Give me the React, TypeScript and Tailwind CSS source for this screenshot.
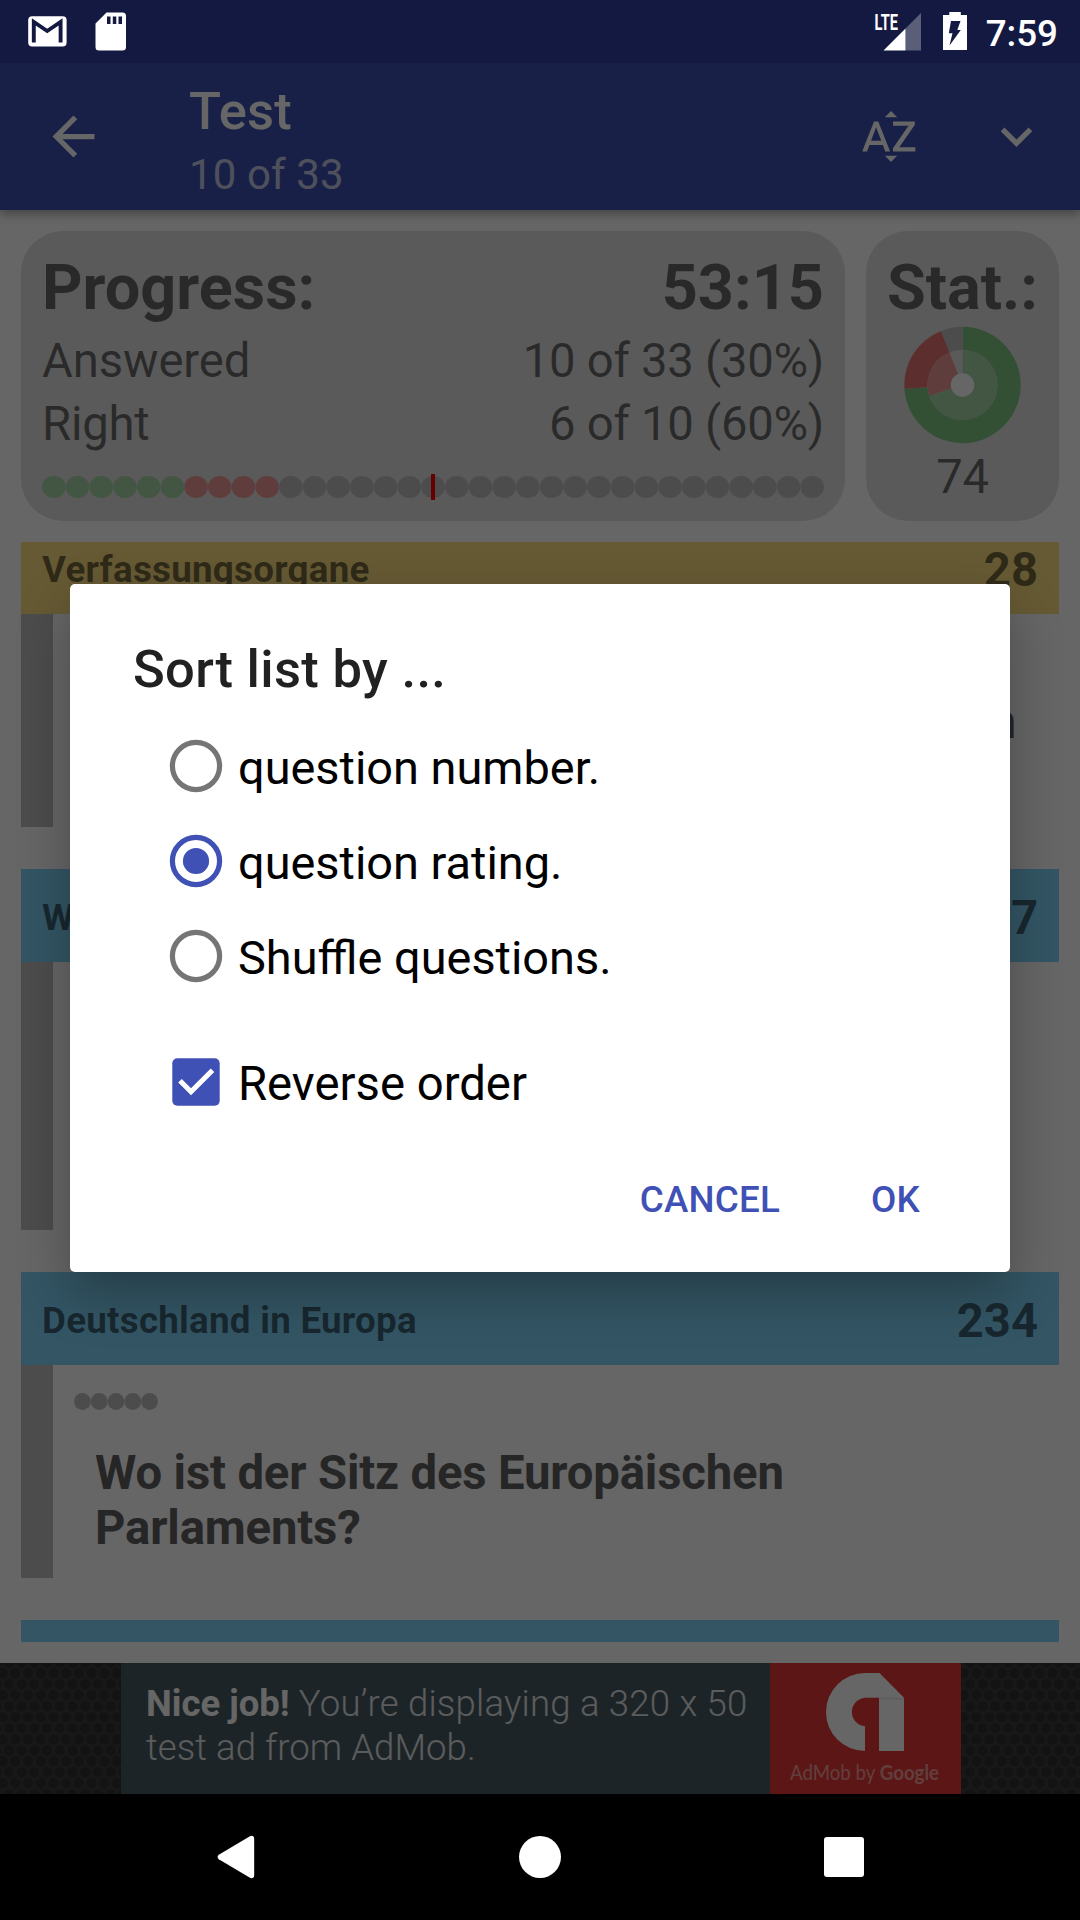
import React from "react";
import { MdArrowBack, MdSortByAlpha, MdExpandMore } from "react-icons/md";

const ANSWER_DOTS = Array.from({ length: 33 }, (_, i) =>
  i < 6 ? "fill-[#a5d6a7]" : i < 10 ? "fill-[#ef9a9a]" : "fill-[#bdbdbd]"
);

function StatusBar() {
  return (
    <div className="relative z-20 flex h-[63px] items-start bg-[#131940] text-white">
      <svg className="ml-7 mt-4 h-[31px] w-[39px]" viewBox="0 0 39 31">
        <rect x="0.2" y="0.2" width="38.4" height="30.4" rx="4" fill="currentColor" />
        <path d="M5.8 26.5V6l13.4 9L32.6 6v20.5" fill="none" stroke="#131940" strokeWidth="3.9" />
      </svg>
      <svg className="ml-7 mt-3 h-[39px] w-[32px]" viewBox="0 0 32 39">
        <path d="M11.500 0.500H27.500a3.500 3.500 0 0 1 3.500 3.500V35a3.500 3.500 0 0 1-3.500 3.500H4A3.500 3.500 0 0 1 .500 35V11.500z" fill="currentColor" />
        <path d="M12 4.500h3.500v7.500H12zM17.800 4.500h3.500v7.500h-3.500zM23.500 4.500h3.500v7.500h-3.500z" fill="#131940" />
      </svg>
      <div className="ml-auto flex items-start">
        <svg className="mt-1 h-[47px] w-[56px]" viewBox="-8 -8 56 47">
          <text x="0.5" y="17.8" fontFamily="Roboto" fontWeight="700" fontSize="22.5" textLength="23.5" lengthAdjust="spacingAndGlyphs" fill="currentColor">LTE</text>
          <path d="M31.500 16.500V38.500H9.500z" fill="currentColor" />
          <path d="M31.500 16.500L47 1V38.500H31.500z" fill="currentColor" opacity="0.3" />
        </svg>
        <svg className="ml-[21px] mt-3 h-[38px] w-[24px]" viewBox="0 0 24 38">
          <path d="M6.300 0h11.500v3H24v35H0V3h6.300z" fill="currentColor" />
          <path d="M8 9h9.500l-3.200 9h3.500L6.500 33.500l3-12.200H5.800z" fill="#131940" />
        </svg>
        <div className="ml-[19px] mr-[22px] mt-2 text-[36.75px] font-medium leading-[51px]">7:59</div>
      </div>
    </div>
  );
}

function AppBar() {
  return (
    <div className="relative z-10 flex h-[147px] items-center bg-[#3f51b5] text-white shadow-[0_4px_10px_rgba(0,0,0,0.35)]">
      <MdArrowBack className="ml-[42px] size-[63px]" />
      <div className="ml-[84px] flex-1 pt-3">
        <div className="text-[52.5px] font-medium leading-[61px] tracking-[0.15px]">Test</div>
        <div className="mt-[3px] text-[42px] leading-[60px] tracking-[0.1px] text-white/70">10 of 33</div>
      </div>
      <MdSortByAlpha className="mb-px size-[63px]" />
      <MdExpandMore className="ml-16 mr-8 size-[63px]" />
    </div>
  );
}

function ProgressCard() {
  return (
    <div className="flex h-[290px] w-[824px] flex-col rounded-[42px] bg-[#e1e1e1] px-[21px] pt-5 text-black/54">
      <div className="flex justify-between text-[63px] font-bold leading-[74px]">
        <span>Progress:</span>
        <span>53:15</span>
      </div>
      <div className="mt-[5px] flex justify-between text-[47.25px] leading-[63px]">
        <span className="tracking-[-0.1px]">Answered</span>
        <span className="tracking-[-0.28px]">10 of 33 (30%)</span>
      </div>
      <div className="flex justify-between text-[47.25px] leading-[63px]">
        <span className="tracking-[-0.2px]">Right</span>
        <span className="tracking-[-0.28px]">6 of 10 (60%)</span>
      </div>
      <svg className="mt-[18px] h-[26px] w-[782px]" viewBox="0 0 782 26">
        {ANSWER_DOTS.map((tone, i) => (
          <ellipse key={i} cx={11.85 + i * 23.7} cy="13" rx="11.8" ry="11.1" className={tone} />
        ))}
        <rect x="389" y="0" width="4" height="26" fill="#ff0000" />
      </svg>
    </div>
  );
}

function arc(r0: number, r1: number, from: number, to: number) {
  const pt = (r: number, pct: number) => {
    const a = (pct / 100) * Math.PI * 2;
    return `${(r * Math.sin(a)).toFixed(2)} ${(-r * Math.cos(a)).toFixed(2)}`;
  };
  const large = to - from > 50 ? 1 : 0;
  return `M${pt(r1, from)}A${r1} ${r1} 0 ${large} 1 ${pt(r1, to)}L${pt(r0, to)}A${r0} ${r0} 0 ${large} 0 ${pt(r0, from)}Z`;
}

function StatCard() {
  return (
    <div className="flex h-[290px] w-[193px] flex-col items-center rounded-[42px] bg-[#e1e1e1] pt-5 text-black/54">
      <div className="text-[63px] font-bold leading-[74px]">Stat.:</div>
      <svg className="mr-px mt-px size-[118px]" viewBox="-59.5 -59 118 118">
        <path d={arc(35, 58.2, 0, 74)} fill="#81c784" />
        <path d={arc(35, 58.2, 74, 94)} fill="#e57373" />
        <path d={arc(35, 58.2, 94, 100)} fill="#bdbdbd" />
        <path d={arc(11.5, 35, 0, 70)} fill="#a5d6a7" />
        <path d={arc(11.5, 35, 70, 94)} fill="#ef9a9a" />
        <path d={arc(11.5, 35, 94, 100)} fill="#e0e0e0" />
        <circle r="11.7" fill="#ffffff" />
      </svg>
      <div className="mt-0.5 text-[47.25px] leading-[63px] tracking-[-0.2px]">74</div>
    </div>
  );
}

function SectionHeader({ title, count, tone }: { title: string; count: string; tone: string }) {
  return (
    <div className={`flex h-[93px] shrink-0 items-center justify-between px-[21px] pt-1 font-bold text-black/54 ${tone}`}>
      <span className="text-[36.75px] tracking-[0.25px]">{title}</span>
      <span className="mt-px text-[47.25px]">{count}</span>
    </div>
  );
}

function QuestionList() {
  return (
    <div className="mx-[21px] mt-[21px] flex h-[1100px] flex-col justify-end overflow-hidden">
      <SectionHeader title="Verfassungsorgane" count="28" tone="bg-[#ffe082]" />
      <div className="flex h-[213px] shrink-0 justify-between">
        <div className="w-8 bg-[#bdbdbd]" />
        <div className="mr-[43px] mt-[81px] text-[47.25px] font-bold leading-[55px] text-[#606060]">n</div>
      </div>
      <div className="mt-[42px] shrink-0">
        <SectionHeader title="W" count="7" tone="bg-[#81d4fa]" />
        <div className="h-[268px] w-8 bg-[#bdbdbd]" />
      </div>
      <div className="mt-[42px] shrink-0">
        <SectionHeader title="Deutschland in Europa" count="234" tone="bg-[#81d4fa]" />
        <div className="flex h-[213px]">
          <div className="w-8 bg-[#bdbdbd]" />
          <div className="flex-1 pl-[21px] pt-7">
            <svg className="h-[17px] w-[84px]" viewBox="0 0 84 17">
              {[0, 1, 2, 3, 4].map((i) => (
                <circle key={i} cx={8.4 + i * 16.8} cy="8.5" r="8.4" fill="#bdbdbd" />
              ))}
            </svg>
            <p className="ml-[21px] mt-9 w-[800px] text-[47.25px] font-bold leading-[55px] tracking-[-0.16px] text-[#606060]">
              Wo ist der Sitz des Europäischen Parlaments?
            </p>
          </div>
        </div>
      </div>
      <div className="mt-[42px] h-[22px] shrink-0 bg-[#81d4fa]" />
    </div>
  );
}

function HexPanel({ id, className }: { id: string; className: string }) {
  return (
    <svg className={className}>
      <defs>
        <pattern id={id} width="12.7" height="22" patternUnits="userSpaceOnUse">
          <rect width="13" height="22" fill="#3e3e3e" />
          <circle cx="9" cy="21.3" r="5.2" fill="#303030" />
          <circle cx="9" cy="-0.7" r="5.2" fill="#303030" />
          <circle cx="-3.7" cy="21.3" r="5.2" fill="#303030" />
          <circle cx="-3.7" cy="-0.7" r="5.2" fill="#303030" />
          <circle cx="2.65" cy="10.3" r="5.2" fill="#303030" />
          <circle cx="15.35" cy="10.3" r="5.2" fill="#303030" />
        </pattern>
      </defs>
      <rect width="100%" height="100%" fill={`url(#${id})`} />
    </svg>
  );
}

function AdBanner() {
  return (
    <div className="mt-[21px] flex h-[131px]">
      <HexPanel id="hex-left" className="h-[131px] w-[121px]" />
      <div className="w-[649px] bg-[#485a62] pl-[25px] pt-[19px] text-[36.5px] font-light leading-[44px] text-white/85">
        <div className="whitespace-nowrap tracking-[0.23px]">
          <b className="font-bold tracking-normal text-white">Nice job!</b> You’re displaying a 320 x 50
        </div>
        <div className="tracking-[0.07px]">test ad from AdMob.</div>
      </div>
      <div className="relative w-[191px] bg-[#e53935]">
        <svg className="h-[131px] w-[191px]" viewBox="0 0 191 131">
          <path
            d="M95 10H109.500L134 34.700V88H109V34.700H95A14.300 14.300 0 0 0 95 63.200V88A39 39 0 0 1 95 10Z"
            fill="#ffffff"
          />
          <path d="M109 34.700h25v2h-25z" fill="#000000" opacity="0.08" />
          <text x="20" y="117" fontFamily="Lato" fontSize="21" fill="#ffffff" fillOpacity="0.52" textLength="149" lengthAdjust="spacingAndGlyphs">
            AdMob by <tspan fontWeight="700">Google</tspan>
          </text>
        </svg>
      </div>
      <HexPanel id="hex-right" className="h-[131px] w-[119px]" />
    </div>
  );
}

function NavBar() {
  return (
    <div className="relative z-20 flex h-[126px] items-center bg-black text-white">
      <svg className="ml-[217px] h-[44px] w-[38px]" viewBox="0 0 38 44">
        <path d="M1.800 19.800 32.500 1.400C35 0 37.200 1 37.200 4V40c0 3-2.200 4-4.700 2.600L1.800 24.200C.200 23 .200 21 1.800 19.800Z" fill="currentColor" />
      </svg>
      <div className="ml-[264px] size-[42px] rounded-full bg-white" />
      <div className="ml-[263px] size-10 rounded-[3px] bg-white" />
    </div>
  );
}

function RadioRow({ label, checked = false }: { label: string; checked?: boolean }) {
  return (
    <div className="flex h-[95px] items-center">
      <svg className={checked ? "mb-[3px] size-[54px] text-[#3f51b5]" : "mb-[3px] size-[54px] text-[#757575]"} viewBox="0 0 54 54">
        <circle cx="27" cy="27" r="23.6" fill="none" stroke="currentColor" strokeWidth="5.2" />
        {checked && <circle cx="27" cy="27" r="13.1" fill="currentColor" />}
      </svg>
      <span className="ml-[15px] mt-0.5 text-[46.9px]">{label}</span>
    </div>
  );
}

function SortDialog() {
  return (
    <div className="absolute left-[70px] top-[584px] z-30 h-[688px] w-[940px] rounded-[5px] bg-white pt-[55px] shadow-[0_22px_52px_rgba(0,0,0,0.28)]">
      <h2 className="ml-[63px] text-[52.5px] font-medium leading-[61px] tracking-[0.33px] text-[#212121]">Sort list by ...</h2>
      <div className="ml-[99px] mt-5 text-[47.25px] text-black">
        <RadioRow label="question number." />
        <RadioRow label="question rating." checked />
        <RadioRow label="Shuffle questions." />
        <div className="mt-[31px] flex h-[95px] items-center">
          <svg className="mb-[3px] ml-[3px] size-[48px]" viewBox="0 0 48 48">
            <rect x="0.3" y="0.3" width="47.4" height="47.4" rx="5" fill="#3f51b5" />
            <path d="M8 22.800 19 33.800 40.500 12.200" fill="none" stroke="#ffffff" strokeWidth="5" />
          </svg>
          <span className="ml-[18px] mt-0.5">Reverse order</span>
        </div>
      </div>
      <div className="mr-[90px] mt-[43px] flex justify-end gap-[91px] text-[36.75px] font-medium leading-[51px] tracking-[0.2px] text-[#3f51b5]">
        <span>CANCEL</span>
        <span>OK</span>
      </div>
    </div>
  );
}

export default function App() {
  return (
    <div className="relative flex h-[1920px] w-[1080px] flex-col overflow-hidden bg-white font-[Roboto,sans-serif]">
      <StatusBar />
      <AppBar />
      <div className="mx-[21px] mt-[21px] flex gap-[21px]">
        <ProgressCard />
        <StatCard />
      </div>
      <QuestionList />
      <AdBanner />
      <NavBar />
      <div className="absolute inset-x-0 bottom-[126px] top-[63px] z-10 bg-black/60" />
      <SortDialog />
    </div>
  );
}
